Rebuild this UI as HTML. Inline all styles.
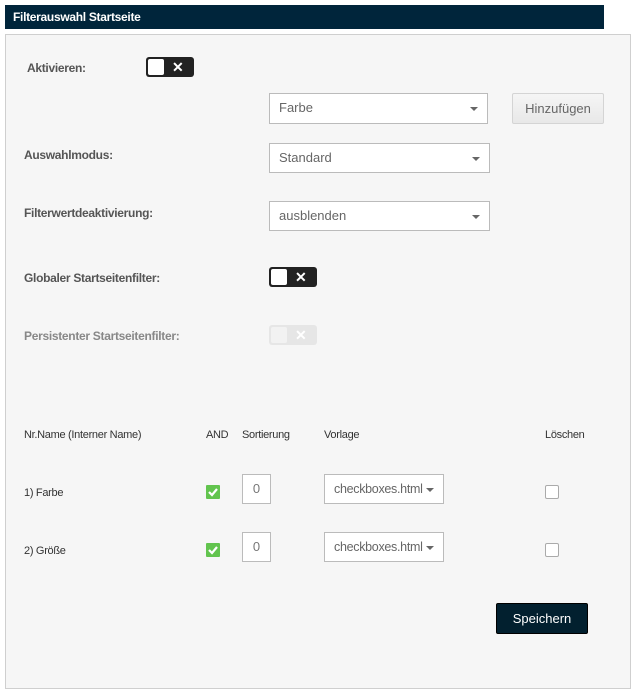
<!DOCTYPE html>
<html><head><meta charset="utf-8"><style>
*{box-sizing:border-box;margin:0;padding:0}
body{width:635px;height:694px;background:#fff;font-family:"Liberation Sans",sans-serif;position:relative;overflow:hidden}
.a{position:absolute}
.hdr{left:5px;top:5px;width:599px;height:24px;background:#00253b;color:#fff;font-weight:bold;font-size:12px;line-height:24px;padding-left:8px;letter-spacing:-0.3px}
.panel{left:5px;top:34px;width:626px;height:655px;background:#f6f6f6;border:1px solid #cfcfcf}
.lbl{font-size:12px;font-weight:bold;color:#555;letter-spacing:-0.3px}
.sel{background:#fff;border:1px solid #bbb;font-size:13px;color:#666;padding-left:9px;line-height:28px;white-space:nowrap;overflow:hidden}
.sel:after{content:"";position:absolute;right:9px;top:13px;border-left:4px solid transparent;border-right:4px solid transparent;border-top:4px solid #666}
.tg{width:48px;height:20px;background:#222;border-radius:3px}
.tg i{position:absolute;left:2px;top:2px;width:16px;height:16px;background:#fff;border-radius:2px}
.tg b{position:absolute;left:26px;top:1px;color:#fff;font-size:14px;line-height:18px}
.tg.d{background:#e6e6e6}.tg.d b{color:#fff}.tg.d i{background:#f2f2f2}
.sm{font-size:11px;color:#333;letter-spacing:-0.3px}
.chk{width:14px;height:14px;background:#62c44e;border-radius:1px}
.box{width:14px;height:14px;border:1px solid #aaa;background:#fff;border-radius:2px}
.num{width:29px;height:30px;background:#fff;border:1px solid #bbb;font-size:13px;color:#777;text-align:center;line-height:28px}
.tpl{font-size:12.5px;letter-spacing:-0.3px;padding-right:20px}
</style></head><body>
<div class="a hdr">Filterauswahl Startseite</div>
<div class="a panel"></div>
<div class="a lbl" style="left:27px;top:61px">Aktivieren:</div>
<div class="a tg" style="left:146px;top:57px"><i></i><b>✕</b></div>
<div class="a sel" style="left:269px;top:93px;width:219px;height:31px">Farbe</div>
<div class="a" style="left:512px;top:93px;width:92px;height:31px;background:linear-gradient(#f5f5f5,#e8e8e8);border:1px solid #d4d4d4;border-radius:2px;font-size:13px;color:#666;text-align:center;line-height:29px">Hinzufügen</div>
<div class="a lbl" style="left:24px;top:148px">Auswahlmodus:</div>
<div class="a sel" style="left:269px;top:143px;width:221px;height:30px">Standard</div>
<div class="a lbl" style="left:24px;top:206px">Filterwertdeaktivierung:</div>
<div class="a sel" style="left:269px;top:201px;width:221px;height:30px">ausblenden</div>
<div class="a lbl" style="left:24px;top:271px">Globaler Startseitenfilter:</div>
<div class="a tg" style="left:269px;top:267px"><i></i><b>✕</b></div>
<div class="a lbl" style="left:24px;top:329px;color:#888">Persistenter Startseitenfilter:</div>
<div class="a tg d" style="left:269px;top:325px"><i></i><b>✕</b></div>
<div class="a sm" style="left:24px;top:429px">Nr.Name (Interner Name)</div>
<div class="a sm" style="left:206px;top:429px">AND</div>
<div class="a sm" style="left:242px;top:429px">Sortierung</div>
<div class="a sm" style="left:324px;top:429px">Vorlage</div>
<div class="a sm" style="left:545px;top:429px">Löschen</div>

<div class="a sm" style="left:24px;top:487px">1) Farbe</div>
<div class="a chk" style="left:206px;top:485px"><svg width="14" height="14"><path d="M3 7l3 3 5-6" stroke="#fff" stroke-width="2.2" fill="none"/></svg></div>
<div class="a num" style="left:242px;top:474px">0</div>
<div class="a sel tpl" style="left:324px;top:474px;width:120px;height:30px">checkboxes.html</div>
<div class="a box" style="left:545px;top:485px"></div>

<div class="a sm" style="left:24px;top:545px">2) Größe</div>
<div class="a chk" style="left:206px;top:543px"><svg width="14" height="14"><path d="M3 7l3 3 5-6" stroke="#fff" stroke-width="2.2" fill="none"/></svg></div>
<div class="a num" style="left:242px;top:532px">0</div>
<div class="a sel tpl" style="left:324px;top:532px;width:120px;height:30px">checkboxes.html</div>
<div class="a box" style="left:545px;top:543px"></div>

<div class="a" style="left:496px;top:603px;width:92px;height:31px;background:#02202f;border:1px solid #000;border-radius:2px;color:#fff;font-size:13px;text-align:center;line-height:29px">Speichern</div>
</body></html>
